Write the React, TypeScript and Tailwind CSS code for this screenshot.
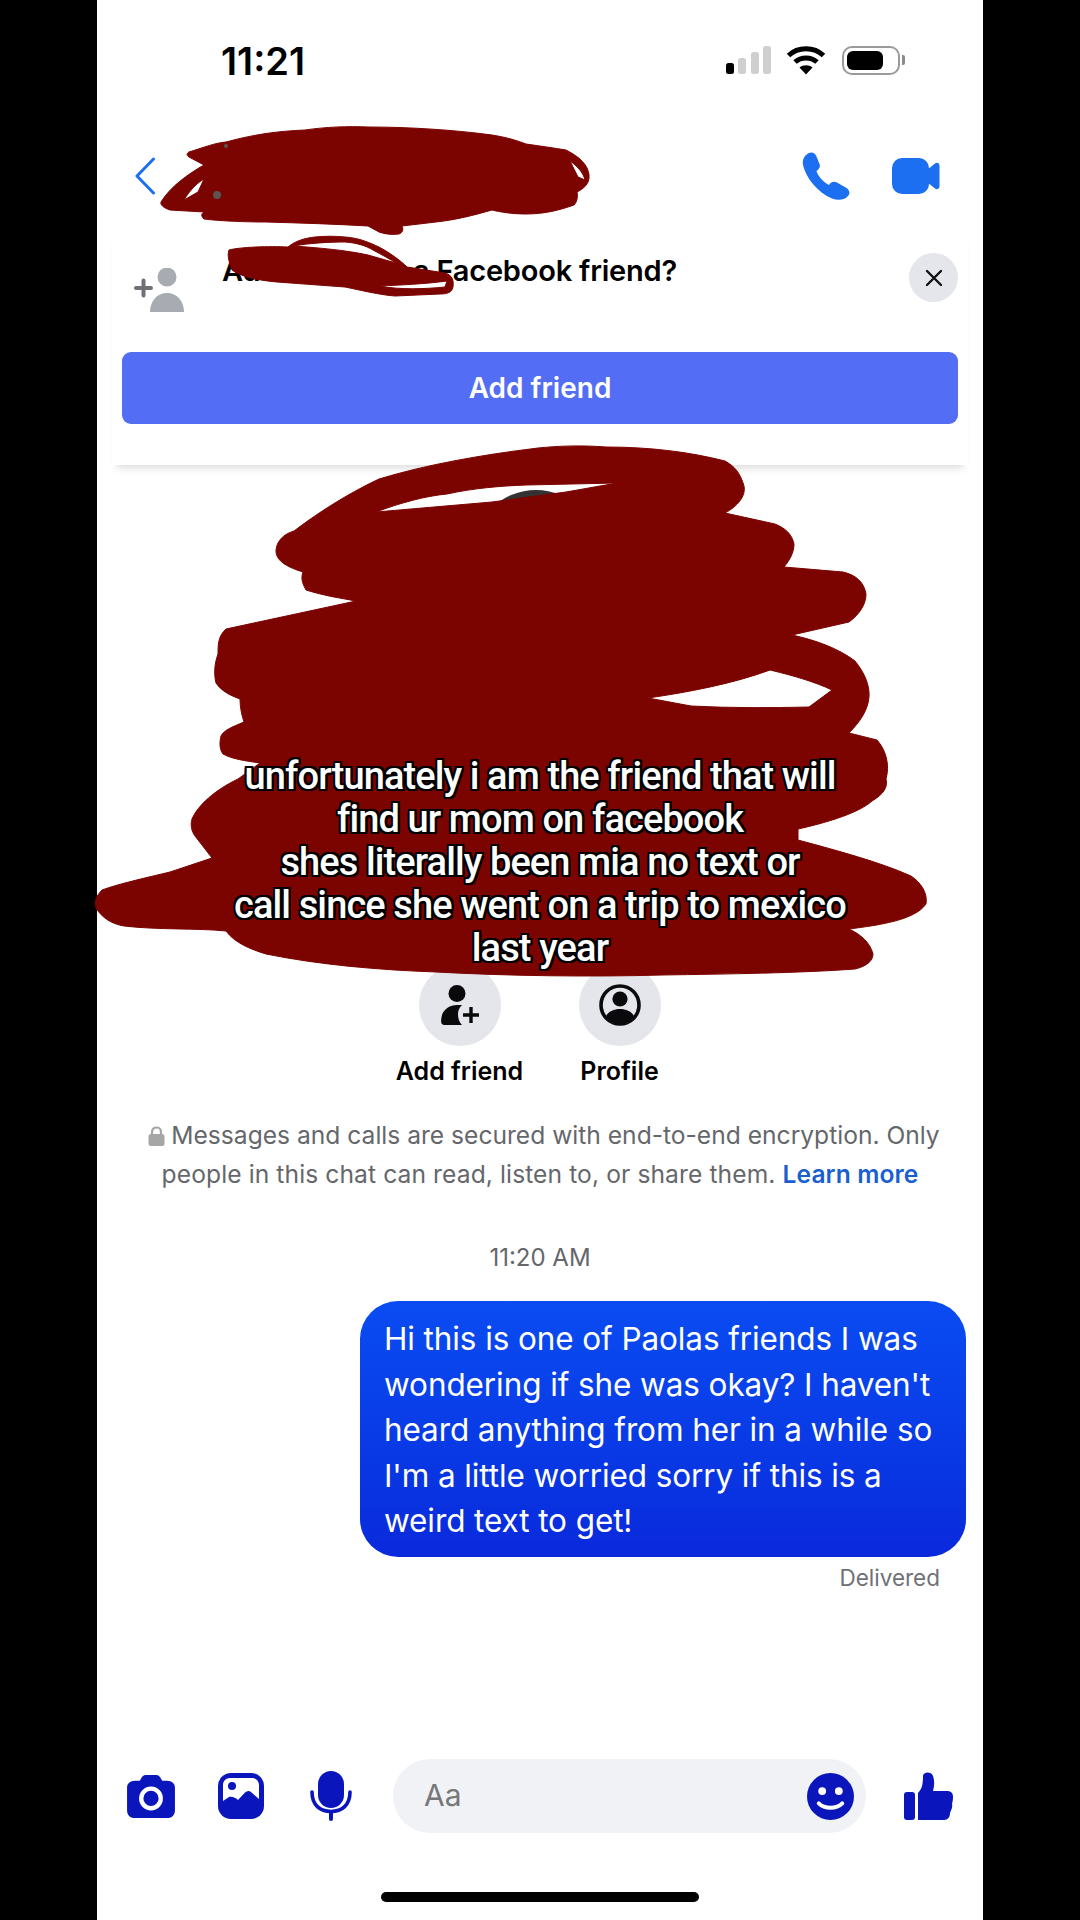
import React from "react";

const RED = "#7b0300";
const ICON = "#0a16bc";

function Scribbles() {
  return (
    <svg className="absolute left-0 top-0 pointer-events-none" width="1080" height="1920" viewBox="0 0 1080 1920">
      <circle cx="536" cy="553" r="63" fill="#333" />
      <g fill={RED} fillRule="evenodd" stroke={RED} strokeWidth="1" strokeLinejoin="round">
        <path d="M294 531 C280 535 276 545 276 551 C276 562 290 568 303 572 C300 580 304 586 306 590 C325 596 340 598 356 601 L226 629 C218 636 218 645 218 654 C214 665 214 675 216 683 C222 692 232 696 240 699 C240 708 242 716 244 722 C232 727 224 730 221 736 C219 744 220 750 223 754 C232 759 246 761 260 763 L238 779 C215 790 198 805 192 819 C190 826 192 832 195 836 L212 858 L170 872 C145 878 118 884 102 890 C96 896 94 902 96 908 C102 918 112 924 124 926 C158 930 196 928 226 931 C235 943 250 949 266 954 C320 965 380 970 436 972 C510 976 590 977 662 975 C730 974 800 973 855 969 C868 966 873 960 873 954 C870 942 860 934 849 929 C880 925 915 920 926 904 C928 892 920 882 911 876 C880 862 835 850 798 840 L798 829 C830 822 860 812 872 801 C884 794 888 787 886 779 C890 765 886 750 877 740 L849 733 C860 722 868 710 869 697 C870 685 864 672 855 661 C838 648 815 640 792 635 L849 622 C860 614 866 604 866 594 C864 582 856 575 843 572 L784 567 C790 560 794 552 794 544 C792 534 785 528 775 524 L725 513 C738 506 746 496 744 486 C740 472 734 466 725 461 C690 452 650 447 606 447 C580 445 558 446 538 448 C480 455 425 465 379 479 C345 495 315 515 294 531 Z
        M376 512 C400 503 425 496 447 494 C475 488 500 486 526 485 L617 483 L566 492 L492 502 Z
        M648 698 C690 692 735 683 770 670 C795 676 815 682 832 690 L809 707 C770 708 730 708 691 706 Z" />
        <path transform="translate(0 2)" d="M189 150 C205 145 215 141 226 140 C255 132 280 129 305 128 C325 125 348 124 368 125 C410 125 455 128 492 133 C505 135 516 138 526 142 C540 144 554 146 566 148 C580 155 588 163 589 173 C590 182 583 187 577 190 C578 195 577 200 574 203 C560 208 545 212 526 212 C512 212 500 210 492 208 C475 213 455 218 436 220 L402 224 C404 228 402 231 399 232 C392 233 384 232 379 230 L368 224 C335 222 300 221 266 220 C245 220 220 219 204 217 C201 214 201 212 204 210 L170 208 C164 206 160 203 161 200 C170 185 188 172 204 163 L189 155 C186 153 187 151 189 150 Z
        M184 198 C190 188 197 181 204 177 L198 190 Z
        M570 159 C577 164 583 170 585 178 L578 175 Z" />
        <path d="M229 250 C240 247 270 246 288 247 C295 241 305 238 315 237 C325 236 335 236 345 237 C360 238 370 243 379 247 C390 253 400 260 407 267 L445 273 C452 275 454 280 453 287 C452 292 448 294 440 294 L395 296 C380 295 360 290 345 287 L277 282 C255 280 240 276 232 270 C229 262 227 255 229 250 Z
        M294 246 C310 243 330 242 345 242 C358 243 366 246 373 250 C382 255 390 259 396 263 L368 255 C345 250 320 248 294 246 Z
        M380 286 C400 285 425 284 447 281 L445 287 C425 289 400 290 380 286 Z" />
      </g>
      <circle cx="217" cy="195" r="4" fill="#5b5450" />
      <circle cx="226" cy="146" r="2" fill="#5b5450" />
    </svg>
  );
}

function AddPersonGray() {
  return (
    <svg width="50" height="44" viewBox="0 0 50 44" className="shrink-0">
      <circle cx="33" cy="9" r="9.5" fill="#a9abb2" />
      <path d="M16 44 C16 33 23 25 33 25 C43 25 50 33 50 44 Z" fill="#a9abb2" />
      <path d="M2 20 H17 M9.5 12.5 V27.5" stroke="#6f7177" strokeWidth="4" strokeLinecap="round" />
    </svg>
  );
}

export default function App() {
  return (
    <div className="relative w-[1080px] h-[1920px] bg-black overflow-hidden font-['Inter','Liberation_Sans',sans-serif]">
      <div className="ml-[97px] w-[886px] h-[1920px] bg-white flex flex-col">
        {/* Status bar */}
        <div className="h-[120px] flex items-start justify-between pt-[40px] pl-[124px] pr-[78px]">
          <span className="text-[38px] leading-[42px] font-semibold text-black tracking-[0px]">11:21</span>
          <div className="flex items-center gap-[16px] mt-[5px]">
            <svg width="46" height="28" viewBox="0 0 46 28" className="-mr-[2px]">
              <rect x="0" y="17" width="8" height="11" rx="2.5" fill="#000" />
              <rect x="12" y="12" width="8" height="16" rx="2.5" fill="#cfcfcf" />
              <rect x="25" y="6" width="8" height="22" rx="2.5" fill="#cfcfcf" />
              <rect x="37" y="0" width="8" height="28" rx="2.5" fill="#cfcfcf" />
            </svg>
            <svg width="40" height="30" viewBox="0 0 40 30" fill="none" stroke="#000" strokeWidth="5">
              <path d="M2.5 10.5 C12 1.5 28 1.5 37.5 10.5" />
              <path d="M9 17 C15 11.5 25 11.5 31 17" />
              <path d="M20 29.5 L13.5 22.5 C17 19.5 23 19.5 26.5 22.5 Z" fill="#000" stroke="none" />
            </svg>
            <div className="flex items-center gap-[2px]">
              <div className="w-[58px] h-[29px] rounded-[10px] border-[2px] border-[#9a9a9a] p-[3px] flex">
                <div className="w-[36px] h-[19px] rounded-[6px] bg-black" />
              </div>
              <div className="w-[3px] h-[10px] rounded-r-[2px] bg-[#8c8c8c]" />
            </div>
          </div>
        </div>

        {/* Header */}
        <div className="h-[108px] flex items-center justify-between pl-[37px] pr-[43px] pt-[3px]">
          <svg width="22" height="38" viewBox="0 0 22 38" fill="none">
            <path d="M19.5 2 L3 19 L19.5 36" stroke="#1b6ff0" strokeWidth="3" strokeLinecap="round" strokeLinejoin="round" />
          </svg>
          <div className="flex items-center gap-[42px]">
            <svg width="48" height="48" viewBox="0 0 48 48" fill="#1b6ff0">
              <path d="M7 1 C10 -0.5 13 1 14.5 4.5 L17.5 12 C18.5 15 17.5 17 14.5 19 C16 24 21 30 27 33 C29 30 32 29 35 30.5 L44.5 36 C47.5 38 48.5 41.5 46 44 C42.5 48 36 49 30 46.5 C16 40.5 4 26.5 1 13 C0 8 2.5 3 7 1 Z" />
            </svg>
            <svg width="48" height="36" viewBox="0 0 48 36" fill="#1b6ff0">
              <rect x="0" y="0" width="37" height="36" rx="10" />
              <path d="M35 12 L43 5.5 C45 4 47.5 5 47.5 8 V28 C47.5 31 45 32 43 30.5 L35 24 Z" />
            </svg>
          </div>
        </div>

        {/* Friend banner */}
        <div className="mx-[15px] h-[237px] bg-white shadow-[0_8px_8px_-5px_rgba(0,0,0,0.14)] flex flex-col px-[10px] pt-[25px]">
          <div className="h-[99px] flex items-start pl-[12px]">
            <div className="pt-[15px] w-[88px] shrink-0">
              <AddPersonGray />
            </div>
            <span className="flex-1 text-[29px] leading-[36px] font-semibold text-black tracking-[-0.2px] whitespace-nowrap">Add Name as a Facebook friend?</span>
            <div className="w-[49px] h-[49px] rounded-full bg-[#e4e6eb] flex items-center justify-center">
              <svg width="18" height="18" viewBox="0 0 18 18" fill="none">
                <path d="M2 2 L16 16 M16 2 L2 16" stroke="#111" strokeWidth="2.4" strokeLinecap="round" />
              </svg>
            </div>
          </div>
          <div className="h-[72px] rounded-[9px] bg-[#536df5] flex items-center justify-center text-white text-[28px] font-semibold">Add friend</div>
        </div>

        {/* Profile actions */}
        <div className="mt-[499px] flex justify-center gap-[78px] pr-[1px]">
          <div className="w-[82px] flex flex-col items-center">
            <div className="w-[82px] h-[82px] rounded-full bg-[#e4e6eb] flex items-center justify-center">
              <svg width="38" height="40" viewBox="0 0 38 40" fill="#0a0a0c">
                <circle cx="16" cy="8.5" r="8.5" />
                <path d="M3 40 C-1 40 0 34 1 30 C3 24 9 20 16 20 H21 C18 23 17 26 17 29 C17 33 18 37 21 40 Z" />
                <path d="M30 22 V38 M22 30 H38" stroke="#0a0a0c" strokeWidth="3.4" fill="none" />
              </svg>
            </div>
            <span className="mt-[9px] text-[25px] leading-[32px] font-semibold text-black whitespace-nowrap">Add friend</span>
          </div>
          <div className="w-[82px] flex flex-col items-center">
            <div className="w-[82px] h-[82px] rounded-full bg-[#e4e6eb] flex items-center justify-center">
              <svg width="42" height="42" viewBox="0 0 42 42">
                <circle cx="21" cy="21" r="19" fill="none" stroke="#0a0a0c" strokeWidth="3.6" />
                <circle cx="21" cy="15" r="7.6" fill="#0a0a0c" />
                <path d="M7 32 C10 27 15 25 21 25 C27 25 32 27 35 32 C31 37.5 26 40 21 40 C16 40 11 37.5 7 32 Z" fill="#0a0a0c" />
              </svg>
            </div>
            <span className="mt-[9px] text-[25px] leading-[32px] font-semibold text-black whitespace-nowrap">Profile</span>
          </div>
        </div>

        {/* Encryption */}
        <div className="mt-[29px] text-center text-[#65676b] text-[24.6px] leading-[39px]">
          <div className="flex justify-center items-center gap-[6px] pl-[8px]">
            <svg width="17" height="20" viewBox="0 0 17 20" fill="#a6a6a6">
              <path d="M4 9 V6 C4 0 13 0 13 6 V9" fill="none" stroke="#a6a6a6" strokeWidth="2.2" />
              <rect x="0.5" y="8" width="16" height="12" rx="2.5" />
            </svg>
            <span>Messages and calls are secured with end-to-end encryption. Only</span>
          </div>
          <div className="tracking-[0.1px]">
            people in this chat can read, listen to, or share them. <span className="text-[#1a5fd0] font-semibold">Learn more</span>
          </div>
        </div>

        {/* Time */}
        <div className="mt-[49px] text-center text-[#65676b] text-[24px] leading-[30px]">11:20 AM</div>

        {/* Bubble */}
        <div className="mt-[28px] ml-[263px] w-[606px] h-[256px] rounded-[38px] bg-gradient-to-b from-[#0b4cf2] to-[#0a29dc] pl-[24px] pt-[15px] text-white text-[31.5px] leading-[45.5px] tracking-[-0.1px] whitespace-nowrap">
          <div>Hi this is one of Paolas friends I was</div>
          <div>wondering if she was okay? I haven't</div>
          <div>heard anything from her in a while so</div>
          <div>I'm a little worried sorry if this is a</div>
          <div>weird text to get!</div>
        </div>
        <div className="mt-[6px] pr-[43px] text-right text-[#6f7176] text-[22.5px] leading-[30px]">Delivered</div>

        {/* Composer */}
        <div className="mt-[166px] h-[74px] flex items-center pl-[30px]">
          <svg width="48" height="43" viewBox="0 0 49 44" fill={ICON} className="mr-[43px]">
            <path d="M8 6 H13 L15 2.5 C16 1 17 0 19 0 H30 C32 0 33 1 34 2.5 L36 6 H41 C46 6 49 9 49 13 V36 C49 41 46 44 41 44 H8 C3 44 0 41 0 36 V13 C0 9 3 6 8 6 Z" />
            <circle cx="24.5" cy="24" r="10" fill="none" stroke="#fff" strokeWidth="4.4" />
          </svg>
          <svg width="46" height="46" viewBox="0 0 46 46" className="mr-[46px]">
            <rect x="0" y="0" width="46" height="46" rx="13" fill={ICON} />
            <path d="M5 28 V12 C5 8 8 5 12 5 H34 C38 5 41 8 41 12 V26 L33 19 C31 17.5 29 18 27 19.5 L20 27 C18 25 14 23 11 24 Z" fill="#fff" />
            <circle cx="14" cy="13" r="4" fill={ICON} />
          </svg>
          <svg width="42" height="50" viewBox="0 0 42 50" className="mr-[41px]">
            <rect x="8" y="0" width="26" height="37" rx="13" fill={ICON} />
            <path d="M2 21 C2 34 10 40.5 21 40.5 C32 40.5 40 34 40 21" fill="none" stroke={ICON} strokeWidth="3.6" strokeLinecap="round" />
            <rect x="19" y="40" width="4" height="10" rx="2" fill={ICON} />
          </svg>
          <div className="w-[473px] h-[74px] rounded-full bg-[#f0f2f5] flex items-center justify-between pl-[31px] pr-[12px]">
            <span className="text-[30px] text-[#767779] -mt-[2px]">Aa</span>
            <svg width="47" height="47" viewBox="0 0 48 48">
              <circle cx="24" cy="24" r="24" fill={ICON} />
              <circle cx="15.5" cy="18.5" r="4" fill="#fff" />
              <circle cx="32.5" cy="18.5" r="4" fill="#fff" />
              <path d="M12 31 C18 37 30 37 36 31" fill="none" stroke="#fff" strokeWidth="4" strokeLinecap="round" />
            </svg>
          </div>
          <svg width="49" height="48" viewBox="0 0 49 48" className="ml-[38px]" fill={ICON}>
            <rect x="0" y="20" width="11" height="28" rx="3" />
            <path d="M14 48 V21 C18 17 19 12 19 4 C19 0 27 -1 29 4 C31 10 30 15 29 19 H43 C47 19 49 21 49 25 C49 28 48.5 30 48 32 C49 35 47 38 46 41 C46 45 44 48 40 48 Z" />
          </svg>
        </div>

        {/* Home indicator */}
        <div className="mt-[59px] mx-auto w-[318px] h-[10px] rounded-full bg-black" />
      </div>

      <Scribbles />

      {/* TikTok caption */}
      <div className="absolute left-[97px] top-[755px] w-[886px] text-center text-white text-[38px] leading-[43px] font-medium tracking-[-0.9px] font-['Roboto','Liberation_Sans',sans-serif] [text-shadow:2px_0_0_#000,-2px_0_0_#000,0_2px_0_#000,0_-2px_0_#000,2px_2px_0_#000,-2px_2px_0_#000,2px_-2px_0_#000,-2px_-2px_0_#000]">
        <div>unfortunately i am the friend that will</div>
        <div>find ur mom on facebook</div>
        <div>shes literally been mia no text or</div>
        <div>call since she went on a trip to mexico</div>
        <div>last year</div>
      </div>
    </div>
  );
}
